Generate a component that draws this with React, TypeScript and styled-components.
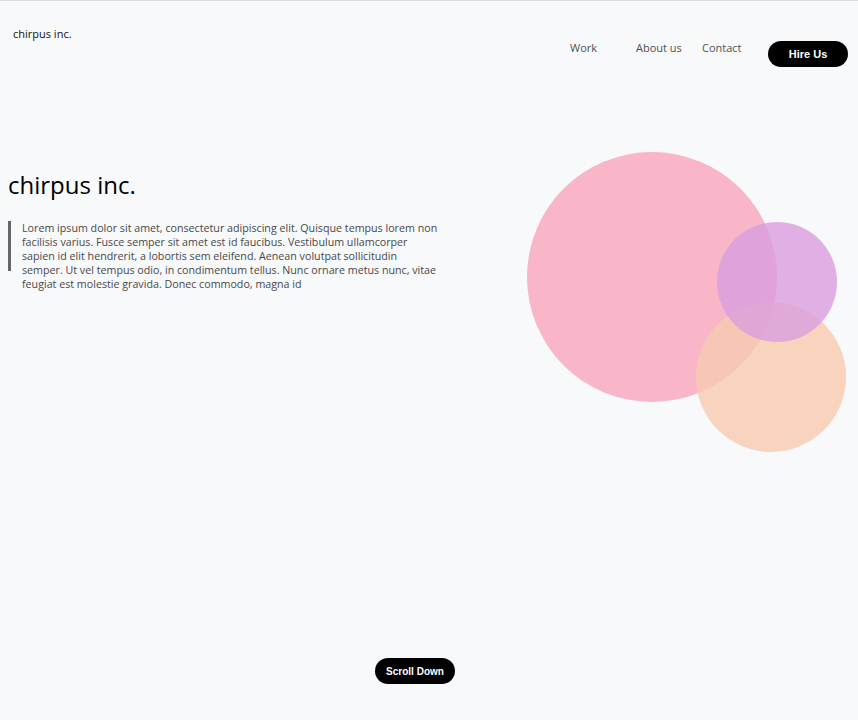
import React from "react";
import styled, { createGlobalStyle } from "styled-components";

const GlobalStyle = createGlobalStyle`
  html, body {
    margin: 0;
    padding: 0;
    background: #f8f9fb;
  }
  * {
    box-sizing: border-box;
  }
`;

const Page = styled.div`
  min-height: 100vh;
  display: flex;
  flex-direction: column;
  border-top: 1px solid #dcdcdc;
  font-family: "Open Sans", "Liberation Sans", sans-serif;
  background: #f8f9fb;
`;

const Header = styled.header`
  display: flex;
  align-items: flex-start;
  padding: 0 10px 0 13px;
`;

const Logo = styled.div`
  margin-top: 25px;
  font-size: 11px;
  line-height: 15px;
  color: #111;
`;

const Nav = styled.nav`
  margin-left: auto;
  margin-top: 38px;
  display: flex;
  align-items: flex-start;
`;

const NavLink = styled.a`
  width: 66px;
  font-size: 11px;
  line-height: 17px;
  color: #4f4f4f;
  text-decoration: none;
  cursor: pointer;
`;

const PillButton = styled.button<{ $offset?: number; $size?: number }>`
  width: 80px;
  height: 26px;
  margin-top: ${(p) => p.$offset ?? 0}px;
  padding: 0;
  border: none;
  border-radius: 13px;
  background: #000;
  color: #fff;
  font-family: "Liberation Sans", Arial, sans-serif;
  font-weight: 700;
  font-size: ${(p) => p.$size ?? 11}px;
  white-space: nowrap;
  cursor: pointer;
`;

const Hero = styled.section`
  display: flex;
  justify-content: space-between;
  align-items: flex-start;
  margin-top: 85px;
  padding: 0 11px 0 8px;
`;

const Intro = styled.div`
  margin-top: 17px;
  width: 440px;
`;

const Title = styled.h1`
  margin: 0;
  font-size: 24px;
  line-height: 32px;
  font-weight: 400;
  color: #000;
`;

const Quote = styled.div`
  display: flex;
  gap: 11px;
  margin-top: 20px;
`;

const QuoteBar = styled.div`
  flex: none;
  width: 3px;
  height: 50px;
  background: #666;
`;

const QuoteText = styled.p`
  margin: 0;
  width: 418px;
  font-size: 10.7px;
  line-height: 14px;
  color: #484848;
`;

const Footer = styled.footer`
  margin-top: auto;
  display: flex;
  justify-content: center;
  padding: 0 28px 36px 0;
`;

const Bubbles = () => (
  <svg width="320" height="300" viewBox="0 0 320 300">
    <circle cx="125" cy="125" r="125" fill="rgba(248,165,187,0.8)" />
    <circle cx="244" cy="225" r="75" fill="rgba(247,203,176,0.8)" />
    <circle cx="250" cy="130" r="60" fill="rgba(218,158,222,0.8)" />
  </svg>
);

export default function App() {
  return (
    <>
      <GlobalStyle />
      <Page>
        <Header>
          <Logo>chirpus inc.</Logo>
          <Nav>
            <NavLink>Work</NavLink>
            <NavLink>About us</NavLink>
            <NavLink>Contact</NavLink>
            <PillButton $offset={2}>Hire Us</PillButton>
          </Nav>
        </Header>
        <Hero>
          <Intro>
            <Title>chirpus inc.</Title>
            <Quote>
              <QuoteBar />
              <QuoteText>
                Lorem ipsum dolor sit amet, consectetur adipiscing elit. Quisque
                tempus lorem non facilisis varius. Fusce semper sit amet est id
                faucibus. Vestibulum ullamcorper sapien id elit hendrerit, a
                lobortis sem eleifend. Aenean volutpat sollicitudin semper. Ut
                vel tempus odio, in condimentum tellus. Nunc ornare metus nunc,
                vitae feugiat est molestie gravida. Donec commodo, magna id
              </QuoteText>
            </Quote>
          </Intro>
          <Bubbles />
        </Hero>
        <Footer>
          <PillButton $size={10}>Scroll Down</PillButton>
        </Footer>
      </Page>
    </>
  );
}
